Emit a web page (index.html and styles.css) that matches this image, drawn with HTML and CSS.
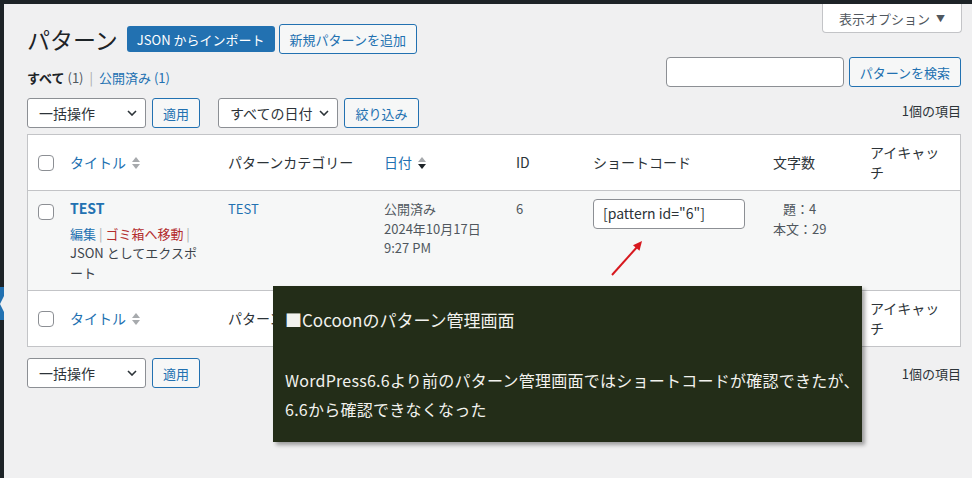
FILE: index.html
```html
<!DOCTYPE html>
<html lang="ja">
<head>
<meta charset="utf-8">
<title>パターン</title>
<link rel="stylesheet" href="styles.css">
</head>
<body>
<div class="adminbar"></div>
<div class="layout">
  <aside class="adminmenu"><div class="menu-current"><span class="menu-arrow"></span></div></aside>
  <main class="wrap">
    <div class="top">
      <div class="title-group">
        <h1 class="page-title">パターン</h1>
        <a class="btn-primary">JSON からインポート</a>
        <a class="btn-outline">新規パターンを追加</a>
      </div>
      <div class="screen-options">表示オプション <span class="caret">▼</span></div>
    </div>
    <div class="sub-row">
      <ul class="subsubsub">
        <li><strong class="current">すべて</strong> <span class="count">(1)</span></li>
        <li class="sep">|</li>
        <li><a class="link">公開済み (1)</a></li>
      </ul>
      <div class="search-box">
        <div class="search-input"></div>
        <div class="btn-secondary">パターンを検索</div>
      </div>
    </div>
    <div class="tablenav top-nav">
      <div class="actions">
        <div class="select w-bulk"><span>一括操作</span><svg class="chev" width="10" height="6" viewBox="0 0 10 6"><path d="M1 1l4 4 4-4" fill="none" stroke="#2c3338" stroke-width="1.6"/></svg></div>
        <div class="btn-secondary">適用</div>
      </div>
      <div class="actions">
        <div class="select"><span>すべての日付</span><svg class="chev" width="10" height="6" viewBox="0 0 10 6"><path d="M1 1l4 4 4-4" fill="none" stroke="#2c3338" stroke-width="1.6"/></svg></div>
        <div class="btn-secondary">絞り込み</div>
      </div>
      <div class="num">1個の項目</div>
    </div>
    <table class="list">
      <colgroup>
        <col class="c-cb"><col class="c-title"><col class="c-cat"><col class="c-date"><col class="c-id"><col class="c-sc"><col class="c-cnt"><col class="c-eye">
      </colgroup>
      <thead>
        <tr>
          <th class="cb"><span class="checkbox"></span></th>
          <th><a class="sortable">タイトル<svg class="sort" width="8" height="16" viewBox="0 0 8 16"><path d="M4 2L8 7H0Z" fill="#a7aaad"/><path d="M0 9H8L4 14Z" fill="#a7aaad"/></svg></a></th>
          <th>パターンカテゴリー</th>
          <th><a class="sortable">日付<svg class="sort" width="8" height="16" viewBox="0 0 8 16"><path d="M4 2L8 7H0Z" fill="#a7aaad"/><path d="M0 9H8L4 14Z" fill="#1d2327"/></svg></a></th>
          <th>ID</th>
          <th>ショートコード</th>
          <th>文字数</th>
          <th>アイキャッチ</th>
        </tr>
      </thead>
      <tbody>
        <tr class="alt">
          <td class="cb"><span class="checkbox"></span></td>
          <td>
            <strong class="row-title">TEST</strong>
            <div class="row-actions"><a class="link">編集</a> <span class="sep">|</span> <a class="trash">ゴミ箱へ移動</a> <span class="sep">|</span><br><span class="export">JSON としてエクスポ<br>ート</span></div>
          </td>
          <td><a class="link">TEST</a></td>
          <td>公開済み<br>2024年10月17日<br>9:27 PM</td>
          <td>6</td>
          <td><div class="sc-input">[pattern id="6"]</div></td>
          <td><div class="count-box">題：4<br>本文：29</div></td>
          <td></td>
        </tr>
      </tbody>
      <tfoot>
        <tr>
          <th class="cb"><span class="checkbox"></span></th>
          <th><a class="sortable">タイトル<svg class="sort" width="8" height="16" viewBox="0 0 8 16"><path d="M4 2L8 7H0Z" fill="#a7aaad"/><path d="M0 9H8L4 14Z" fill="#a7aaad"/></svg></a></th>
          <th>パターンカテゴリー</th>
          <th class="covered"><a class="sortable">日付<svg class="sort" width="8" height="16" viewBox="0 0 8 16"><path d="M4 2L8 7H0Z" fill="#a7aaad"/><path d="M0 9H8L4 14Z" fill="#1d2327"/></svg></a></th>
          <th class="covered">ID</th>
          <th class="covered">ショートコード</th>
          <th class="covered">文字数</th>
          <th>アイキャッチ</th>
        </tr>
      </tfoot>
    </table>
    <div class="tablenav bottom-nav">
      <div class="actions">
        <div class="select w-bulk"><span>一括操作</span><svg class="chev" width="10" height="6" viewBox="0 0 10 6"><path d="M1 1l4 4 4-4" fill="none" stroke="#2c3338" stroke-width="1.6"/></svg></div>
        <div class="btn-secondary">適用</div>
      </div>
      <div class="num">1個の項目</div>
    </div>
  </main>
</div>
<div class="callout">
  <p class="callout-title">■Cocoonのパターン管理画面</p>
  <p class="callout-body"><span class="line">WordPress6.6より前のパターン管理画面ではショートコードが確認できたが、</span><span class="line">6.6から確認できなくなった</span></p>
</div>
<svg class="arrow" width="45" height="45" viewBox="0 0 45 45"><line x1="7" y1="40" x2="33" y2="11" stroke="#d7191f" stroke-width="2"/><path d="M37 6L34.5 15.8L28 10.2Z" fill="#d7191f"/></svg>
</body>
</html>
```

FILE: styles.css
```css
* { box-sizing: border-box; }
html, body { margin: 0; padding: 0; }
body {
  background: #f0f0f1;
  font-family: "Noto Sans CJK JP", "Noto Sans", sans-serif;
  font-size: 13px;
  color: #3c434a;
  width: 972px;
  height: 478px;
  overflow: hidden;
  position: relative;
}
a { text-decoration: none; cursor: pointer; }
.link { color: #2271b1; }

.adminbar { height: 4px; background: #1d2327; }
.layout { display: flex; height: 474px; }
.adminmenu { width: 4px; flex: none; background: #1d2327; padding-top: 283px; }
.menu-current { height: 33px; background: #2271b1; display: flex; align-items: center; justify-content: flex-end; }
.menu-arrow { width: 0; height: 0; border-style: solid; border-width: 8px 4px 8px 0; border-color: transparent #f0f0f1 transparent transparent; }

.wrap { flex: 1; padding: 0 11px 0 23px; }

.top { display: flex; justify-content: space-between; align-items: flex-start; height: 50px; }
.title-group { display: flex; align-items: center; margin-top: 20px; height: 30px; }
.page-title { margin: 0 9px 0 0; font-size: 23px; font-weight: 400; color: #1d2327; line-height: 30px; }
.btn-primary {
  height: 26px; padding: 0 10px; background: #2271b1; color: #fff; border-radius: 3px;
  display: inline-flex; align-items: center; margin-right: 4px; font-size: 13px;
}
.btn-outline {
  height: 30px; padding: 0 10px; border: 1px solid #2271b1; color: #2271b1; background: #f6f7f7;
  border-radius: 3px; display: inline-flex; align-items: center; font-size: 13px;
}
.screen-options {
  height: 29px; width: 140px; margin-right: -1px; background: #fff; border: 1px solid #c3c4c7; border-top: none;
  border-radius: 0 0 4px 4px; color: #50575e; display: flex; align-items: center; justify-content: center; gap: 6px;
  font-size: 13px;
}
.caret { font-size: 9px; color: #50575e; }

.sub-row { display: flex; justify-content: space-between; align-items: flex-start; margin-top: 3px; }
.subsubsub { margin: 11px 0 0; padding: 0; list-style: none; display: flex; gap: 6px; line-height: 20px; color: #50575e; }
.subsubsub .current { color: #1d2327; font-weight: 700; }
.subsubsub .count { color: #50575e; }
.subsubsub .sep { color: #a7aaad; }
.search-box { display: flex; gap: 5px; }
.search-input { width: 178px; height: 30px; border: 1px solid #8c8f94; border-radius: 4px; background: #fff; }
.btn-secondary {
  height: 30px; padding: 0 10px; border: 1px solid #2271b1; color: #2271b1; background: #f6f7f7;
  border-radius: 3px; display: inline-flex; align-items: center; font-size: 13px;
}

.tablenav { display: flex; align-items: center; height: 30px; }
.top-nav { margin-top: 10px; }
.bottom-nav { margin-top: 11px; }
.actions { display: flex; gap: 6px; margin-right: 18px; }
.select {
  height: 30px; padding: 0 8px 0 11px; border: 1px solid #8c8f94; border-radius: 3px; background: #fff;
  display: flex; align-items: center; justify-content: space-between; gap: 7px; font-size: 14px; color: #2c3338;
}
.w-bulk { width: 119px; }
.chev { flex: none; }
.num { margin-left: auto; color: #2c3338; }
.top-nav .num { margin-top: -5px; }

.list {
  width: 934px; margin-top: 6px; border: 1px solid #c3c4c7; border-spacing: 0; border-collapse: separate;
  table-layout: fixed; background: #fff;
}
.c-cb { width: 32px; }
.c-title { width: 158px; }
.c-cat { width: 156px; }
.c-date { width: 132px; }
.c-id { width: 77px; }
.c-sc { width: 180px; }
.c-cnt { width: 97px; }
.c-eye { width: 100px; }

.list th {
  padding: 8px 10px; font-size: 14px; line-height: 19.6px; font-weight: 400; text-align: left; color: #2c3338;
  height: 55px;
}
.list thead th { border-bottom: 1px solid #c3c4c7; }
.list tfoot th { border-top: 1px solid #c3c4c7; }
.list th.cb { padding: 0 0 0 10px; }
.list th.covered { color: transparent; }
.list th.covered .sortable { visibility: hidden; }
.sortable { color: #2271b1; display: inline-flex; align-items: center; gap: 6px; }
.sort { flex: none; }
.checkbox { display: block; width: 16px; height: 16px; border: 1px solid #8c8f94; border-radius: 4px; background: #fff; }

.list td { padding: 8px 10px; vertical-align: top; line-height: 19.5px; color: #50575e; background: #f6f7f7; }
.list td.cb { padding: 13px 0 0 10px; }
.row-title { display: block; color: #2271b1; font-size: 14px; font-weight: 700; line-height: 19.6px; }
.row-actions { padding-top: 5px; line-height: 19.5px; color: #a7aaad; }
.row-actions .sep { color: #a7aaad; }
.trash { color: #b32d2e; }
.export { color: #3c434a; }
.sc-input {
  width: 152px; height: 30px; border: 1px solid #8c8f94; border-radius: 4px; background: #fff;
  padding: 0 9px; display: flex; align-items: center; font-size: 14px; color: #2c3338;
}
.count-box { display: inline-block; text-align: center; }

.callout {
  position: absolute; left: 273px; top: 286px; width: 589px; height: 156px;
  background: #232d18; color: #f2f2ee; padding: 20px 12px 0;
  box-shadow: 3px 3px 4px rgba(0, 0, 0, 0.35);
}
.callout-title { margin: 0; font-size: 17px; line-height: 28px; font-weight: 400; }
.callout-body { margin: 32px 0 0; font-size: 16px; line-height: 29px; letter-spacing: 0.25px; }
.callout-body .line { display: block; white-space: nowrap; }

.arrow { position: absolute; left: 605px; top: 235px; }
```
